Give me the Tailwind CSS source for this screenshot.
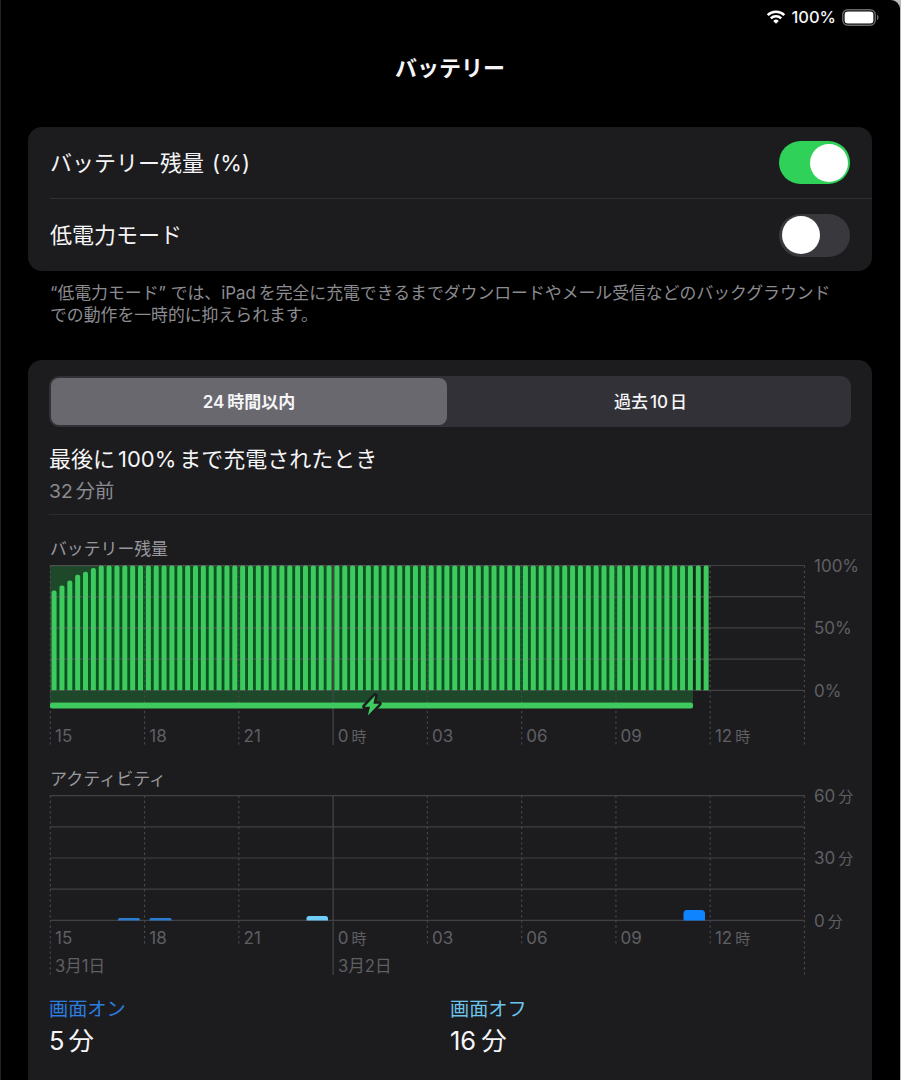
<!DOCTYPE html>
<html lang="ja">
<head>
    <meta charset="UTF-8">
    <meta name="viewport" content="width=device-width, initial-scale=1.0">
    <title>バッテリー</title>
    <script src="https://cdn.jsdelivr.net/npm/@tailwindcss/browser@4"></script>
</head>
<body class="h-[1080px] overflow-hidden bg-[#b9bab8] font-['Inter','Noto_Sans_CJK_JP',sans-serif] text-[#f5f5f7]">
    <div class="h-[1080px] w-[900px] overflow-hidden rounded-tr-[9px] border-l border-[#242424] bg-black pl-[27px] pr-7">
        <!-- Status bar -->
        <header class="-mr-[7px] flex h-8 items-center justify-end pt-[2px]">
            <svg class="mr-[5px] h-[14px] w-[20px]" viewBox="0 0 19 14" fill="none" stroke="#fff" stroke-width="2.5">
                <path d="M1.2 5.2a11.8 11.8 0 0 1 16.6 0"/>
                <path d="M4.3 8.4a7.4 7.4 0 0 1 10.4 0"/>
                <path d="M9.5 13.7 6.7 10.9a4 4 0 0 1 5.6 0z" fill="#fff" stroke="none"/>
            </svg>
            <span class="mr-[6px] text-[16.500px] font-medium leading-none">100%</span>
            <svg class="h-[17px] w-[37px]" viewBox="0 0 37 17">
                <rect x=".75" y=".75" width="32.5" height="15.5" rx="5" fill="none" stroke="#69696b" stroke-width="1.4"/>
                <rect x="2.6" y="2.6" width="28.8" height="11.8" rx="3.2" fill="#fff"/>
                <path d="M35 5.8c2 .7 2 4.7 0 5.4z" fill="#69696b"/>
            </svg>
        </header>

        <h1 class="flex h-[72px] items-center justify-center text-[22px] font-semibold">バッテリー</h1>

        <!-- Toggles -->
        <section class="mt-[23px] h-36 rounded-[14px] bg-[#1c1c1e] pl-[22px] text-[22px]">
            <div class="flex h-[72px] items-center justify-between border-b border-[#303033] pr-[22px]">
                <span class="pt-[2px]">バッテリー残量<span class="ml-[8px] tracking-[0.2px]">(%)</span></span>
                <span class="flex h-[43px] w-[71px] items-center justify-end rounded-full bg-[#30d158] pr-[2.5px]">
                    <span class="size-[38px] rounded-full bg-white"></span>
                </span>
            </div>
            <div class="flex h-[72px] items-center justify-between pr-[22px]">
                <span>低電力モード</span>
                <span class="flex h-[43px] w-[71px] items-center rounded-full bg-[#39393d] pl-[2.5px]">
                    <span class="size-[38px] rounded-full bg-white"></span>
                </span>
            </div>
        </section>
        <p class="mt-[11px] h-[78px] whitespace-nowrap pl-[22px] text-[16.850px] leading-[22px] text-[#8b8b90]">“低電力モード” では、iPad<span class="ml-[3px]">を完全に充電できるまでダウンロードやメール受信などのバックグラウンド</span><br>での動作を一時的に抑えられます。</p>

        <!-- Usage -->
        <section class="h-[740px] rounded-t-[14px] bg-[#1c1c1e] pl-[21px] pt-4">
            <div class="mr-[21px] flex h-[51px] rounded-[10px] bg-[#323137] p-[2px] text-[17px] font-medium">
                <div class="flex w-[396px] items-center justify-center rounded-[8px] bg-[#6a686f] pt-[2px] font-semibold">24<span class="ml-[3px]">時間以内</span></div>
                <div class="flex flex-1 items-center justify-center pl-[5px] pt-[2px]">過去<span class="mx-[2px]">10</span>日</div>
            </div>
            <div class="h-[88px] border-b border-[#2b2b2e] pt-[16px]">
                <h2 class="text-[22px] leading-[32px]">最後に<span class="mx-[3px]">100%</span>まで充電されたとき</h2>
                <p class="text-[19.300px] leading-[33px] text-[#8b8b90]">32<span class="ml-[3px]">分前</span></p>
            </div>
            <svg class="mt-px block h-[470px] w-[823px]" viewBox="49 516 823 470" font-size="17" fill="#5f5f64">
                <text x="50" y="555" font-size="16.850" fill="#98989d">バッテリー残量</text>
                <g id="levelBack"></g>
                <g id="levelGrid"></g>
                <g id="levelBars"></g>
                <rect x="50" y="702.4" width="643" height="6" rx="2" fill="#3fca5f"/>
                <path d="M375.200 695.600 364.600 706.800h5.400l-2.200 8.600 11.400-11.600h-5.800z" fill="#3fca5f" stroke="#1c1c1e" stroke-width="5" stroke-linejoin="round" paint-order="stroke"/>
                <g id="levelHours"></g>
                <text x="814" y="572">100%</text>
                <text x="814" y="634">50%</text>
                <text x="814" y="696.500">0%</text>

                <text x="50" y="785" fill="#98989d">アクティビティ</text>
                <g id="activityGrid"></g>
                <g id="activityHours"></g>
                <path d="M118 920.500v-1q0-1.500 1.500-1.500h19q1.500 0 1.500 1.500v1z" fill="#2b7bd0"/>
                <path d="M149.500 920.500v-1q0-1.500 1.500-1.500h19q1.500 0 1.500 1.500v1z" fill="#2b7bd0"/>
                <path d="M306.500 920.500v-2q0-2.500 2.500-2.500h16.500q2.500 0 2.500 2.500v2z" fill="#70cdfa"/>
                <path d="M683.500 920.500v-7q0-3.500 3.500-3.500h14.500q3.500 0 3.500 3.500v7z" fill="#0f84ff"/>
                <text x="814" y="802">60<tspan dx="3" font-size="15">分</tspan></text>
                <text x="814" y="864">30<tspan dx="3" font-size="15">分</tspan></text>
                <text x="814" y="926.500">0<tspan dx="3" font-size="15">分</tspan></text>
                <text x="55" y="972" font-size="16.600">3月1日</text>
                <text x="338" y="972" font-size="16.600">3月2日</text>
            </svg>
            <div class="mt-[9px] grid grid-cols-[401px_1fr]">
                <div>
                    <p class="text-[19.200px] leading-[29px] text-[#2b7de0]">画面オン</p>
                    <p class="text-[25.500px] leading-[34px]">5<span class="ml-[4px]">分</span></p>
                </div>
                <div>
                    <p class="text-[19.200px] leading-[29px] text-[#6cc4ea]">画面オフ</p>
                    <p class="text-[25.500px] leading-[34px]">16<span class="ml-[5px]">分</span></p>
                </div>
            </div>
        </section>
    </div>

    <script>
        const LEFT = 50.3;
        const STEP = 94.27;
        const SLOT = STEP / 12;
        const hours = ['15', '18', '21', '0時', '03', '06', '09', '12時', ''];
        const levels = [80, 84, 88, 92.5, 95, 98];

        function line(x1, y1, x2, y2, color, dash) {
            return `<path d="M${x1} ${y1}L${x2} ${y2}" stroke="${color}" stroke-width="1.2" ${dash ? 'stroke-dasharray="2.2 3"' : ''}/>`;
        }

        function drawGrid(id, top, bottomOf) {
            let out = '';
            for (let i = 0; i < 5; i++) {
                out += line(LEFT, top + i * 31.2, 804.5, top + i * 31.2, '#414145');
            }
            hours.forEach((h, i) => {
                const x = LEFT + i * STEP;
                out += line(x, top, x, bottomOf(i), i === 3 ? '#46464b' : '#48484c', i !== 3);
            });
            document.getElementById(id).innerHTML = out;
        }

        function drawHours(id, y) {
            document.getElementById(id).innerHTML = hours.map((h, i) => {
                const label = h.replace('時', '<tspan dx="3" font-size="15">時</tspan>');
                return `<text x="${LEFT + i * STEP + 4.7}" y="${y}">${label}</text>`;
            }).join('');
        }

        // Charging background and the darker gaps between bars
        let back = '<rect x="50" y="565.5" width="643" height="137" fill="#1e482a"/>';
        let bars = '';
        for (let i = 0; i < 84; i++) {
            const level = levels[i] || 100;
            const h = 124.8 * level / 100;
            const y = 690.3 - h;
            const x = LEFT + i * SLOT + 1.3;
            if (i < 83) {
                back += `<rect x="${x + 4.5}" y="${y + 1}" width="3.6" height="${h - 1}" fill="${i < 81 ? '#0b5321' : '#0c2c15'}"/>`;
            }
            bars += `<path d="M${x} 690.3v${-h + 2}q0-2 2-2h1q2 0 2 2v${h - 2}z" fill="#3fca5f"/>`;
        }
        // Grid shows faintly through the bars
        for (let i = 0; i < 4; i++) {
            bars += `<rect x="50" y="${565 + i * 31.2}" width="660" height="1.2" fill="#8e8e93" opacity=".22"/>`;
        }
        bars += '<rect x="332.5" y="565.5" width="1.2" height="125" fill="#48484c" opacity=".5"/>';
        document.getElementById('levelBack').innerHTML = back;
        document.getElementById('levelBars').innerHTML = bars;

        drawGrid('levelGrid', 565.5, () => 745);
        drawGrid('activityGrid', 795.6, i => i === 0 || i === 3 || i === 8 ? 975 : 946);
        drawHours('levelHours', 741.5);
        drawHours('activityHours', 944);
    </script>
</body>
</html>
